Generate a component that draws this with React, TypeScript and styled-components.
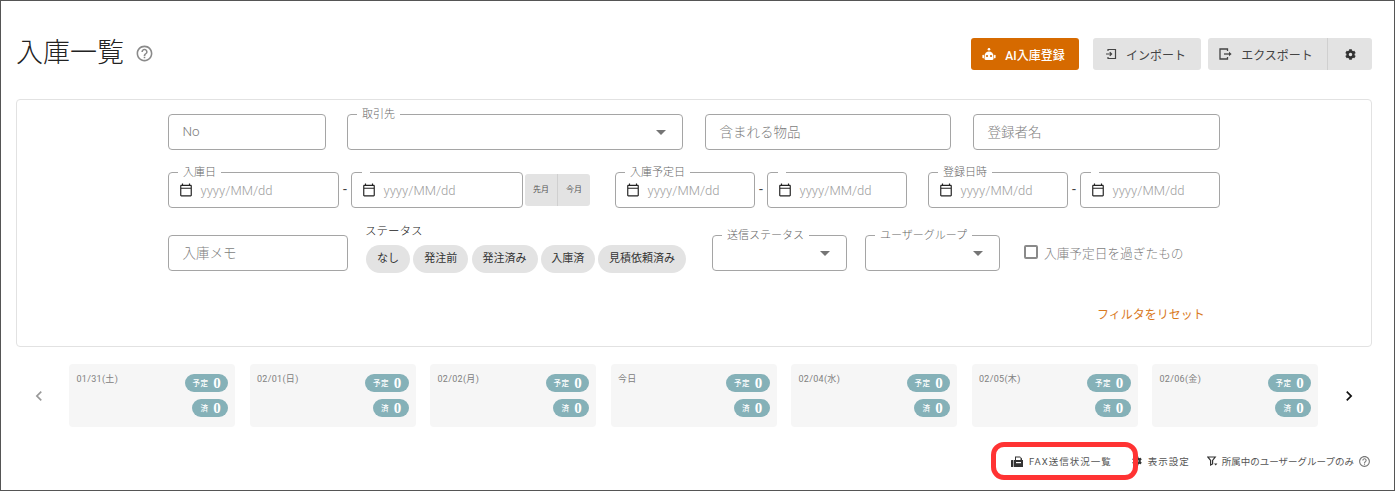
import { ReactNode } from 'react';
import styled, { createGlobalStyle } from 'styled-components';
import { FaCog } from 'react-icons/fa';
import { MdHelpOutline, MdOutlineCalendarToday, MdArrowDropDown, MdChevronLeft, MdChevronRight } from 'react-icons/md';

const GlobalStyle = createGlobalStyle`
    html, body { margin: 0; padding: 0; background: #fff; }
    body {
        font-family: Roboto, "Noto Sans CJK JP", sans-serif;
        font-weight: 300;
        color: #333;
    }
    * { box-sizing: border-box; }
`;

const Page = styled.div`
    position: relative;
    width: 1395px;
    height: 491px;
    border: 1px solid #555;
    padding: 0 22px 0 15px;
    overflow: hidden;
`;

const Header = styled.header`
    height: 98px;
    display: flex;
    justify-content: space-between;
    align-items: flex-start;
`;

const TitleWrap = styled.div`
    display: flex;
    align-items: center;
    gap: 11px;
    margin-top: 33px;
    color: #8a8a8a;
`;

const Title = styled.h1`
    margin: 0;
    font-size: 27px;
    line-height: 38px;
    font-weight: 300;
    color: #222;
`;

const Actions = styled.div`
    display: flex;
    margin-top: 37px;
`;

const Button = styled.button<{ $w: number; $ml?: number; $primary?: boolean; $joined?: 'left' | 'right' }>`
    width: ${(p) => p.$w}px;
    margin-left: ${(p) => p.$ml ?? 0}px;
    height: 32px;
    border: 0;
    padding: 0 ${(p) => (p.$joined === 'right' ? 0 : 3)}px 0 0;
    display: flex;
    align-items: center;
    justify-content: center;
    gap: 9px;
    font-family: inherit;
    font-size: 12px;
    font-weight: ${(p) => (p.$primary ? 500 : 400)};
    letter-spacing: 0;
    color: ${(p) => (p.$primary ? '#fff' : '#444')};
    background: ${(p) => (p.$primary ? '#d66a00' : '#e3e3e3')};
    border-radius: ${(p) => (p.$joined === 'left' ? '3px 0 0 3px' : p.$joined === 'right' ? '0 3px 3px 0' : '3px')};
    border-left: ${(p) => (p.$joined === 'right' ? '1px solid #d0d0d0' : '0')};
`;

const FilterPanel = styled.section`
    width: 1356px;
    height: 248px;
    border: 1px solid #e2e2e2;
    border-radius: 4px;
    padding: 14px 0 0 151px;
`;

const Row = styled.div<{ $mt?: number }>`
    display: flex;
    align-items: flex-start;
    margin-top: ${(p) => p.$mt ?? 0}px;
`;

const Field = styled.div<{ $w: number; $ml?: number }>`
    position: relative;
    flex: none;
    width: ${(p) => p.$w}px;
    height: 36px;
    margin-left: ${(p) => p.$ml ?? 0}px;
    border: 1px solid #a5a5a5;
    border-radius: 4px;
    padding: 0 13px 2px 13.5px;
    display: flex;
    align-items: center;
    justify-content: space-between;
    font-size: 13.5px;
    color: #7d7d7d;
`;

const FieldLegend = styled.span`
    position: absolute;
    top: -7px;
    left: 9px;
    padding: 0 5px;
    background: #fff;
    font-size: 11px;
    line-height: 14px;
    color: #666;
    white-space: nowrap;
`;

const LegendNotch = styled.span`
    position: absolute;
    top: -1px;
    left: 10px;
    width: 8px;
    height: 2px;
    background: #fff;
`;

const Caret = styled(MdArrowDropDown)`
    position: absolute;
    right: 9px;
    top: 5px;
    font-size: 24px;
    color: #757575;
`;

const DateInner = styled.div`
    display: flex;
    align-items: center;
    gap: 8px;
    margin: 0 0 -2px -4px;
    font-size: 13px;
    color: #a0a0a0;
    svg {
        color: #222;
    }
`;

const Dash = styled.span`
    flex: none;
    width: 12px;
    height: 36px;
    line-height: 34px;
    text-align: center;
    font-size: 14px;
    font-weight: 400;
    color: #444;
`;

const MonthGroup = styled.div`
    display: flex;
    flex: none;
    margin: 2px 0 0 2px;
    height: 32px;
    width: 65px;
    border-radius: 3px;
    background: #e3e3e3;
`;

const MonthButton = styled.span`
    flex: 1;
    text-align: center;
    line-height: 32px;
    font-size: 8px;
    font-weight: 400;
    color: #555;
    & + & {
        border-left: 1px solid #d0d0d0;
    }
`;

const StatusBlock = styled.div`
    flex: none;
    width: 321px;
    margin: -12px 0 0 18px;
`;

const StatusLabel = styled.div`
    font-size: 11.5px;
    line-height: 16px;
    font-weight: 300;
    color: #222;
    margin-left: -1px;
`;

const Chips = styled.div`
    display: flex;
    gap: 3.25px;
    margin-top: 6px;
`;

const Chip = styled.span<{ $w: number }>`
    flex: none;
    width: ${(p) => p.$w}px;
    height: 28px;
    border-radius: 14px;
    background: #e3e3e3;
    text-align: center;
    line-height: 28px;
    font-size: 11px;
    font-weight: 400;
    color: #333;
`;

const CheckField = styled.label`
    display: flex;
    align-items: center;
    gap: 6px;
    height: 36px;
    margin-left: 24px;
    padding-bottom: 2px;
    font-size: 12.7px;
    color: #7d7d7d;
`;

const CheckBox = styled.span`
    width: 14px;
    height: 14px;
    border: 2px solid #8a8a8a;
    border-radius: 2px;
`;

const Reset = styled.div`
    margin: 34px 0 0 929px;
    font-size: 12px;
    line-height: 16px;
    font-weight: 400;
    color: #d97a1e;
`;

const CalendarRow = styled.div`
    display: flex;
    align-items: center;
    margin-top: 17px;
    height: 63px;
`;

const ArrowSlot = styled.div<{ $dark?: boolean }>`
    flex: none;
    width: 52px;
    display: flex;
    justify-content: center;
    padding: ${(p) => (p.$dark ? '0 0 0 10px' : '0 6px 0 0')};
    font-size: 20px;
    color: ${(p) => (p.$dark ? '#111' : '#999')};
`;

const DayList = styled.div`
    display: flex;
    gap: 14.5px;
    margin-left: 1px;
`;

const DayCard = styled.div`
    position: relative;
    flex: none;
    width: 166px;
    height: 63px;
    border-radius: 4px;
    background: #f6f6f6;
    padding: 9px 7.5px;
    font-size: 9px;
    line-height: 13px;
    letter-spacing: 0.3px;
    font-weight: 400;
    color: #808080;
`;

const Badges = styled.div`
    position: absolute;
    top: 10px;
    right: 7px;
    display: flex;
    flex-direction: column;
    align-items: flex-end;
    gap: 7px;
`;

const Badge = styled.span`
    display: flex;
    align-items: center;
    gap: 5px;
    height: 18px;
    padding: 0 7px 0 8px;
    border-radius: 9px;
    background: #85b1b8;
    color: #fff;
    font-size: 7.5px;
    font-weight: 500;
`;

const BadgeCount = styled.b`
    font-family: "Liberation Serif", serif;
    font-size: 15px;
    font-weight: 700;
`;

const Footer = styled.footer`
    display: flex;
    justify-content: flex-end;
    align-items: center;
    margin-top: 24px;
    height: 20px;
    padding-right: 1px;
    font-size: 9.5px;
    font-weight: 400;
    color: #555;
`;

const FooterItem = styled.span<{ $ml?: number; $gap?: number; $spacing?: number }>`
    display: flex;
    align-items: center;
    gap: ${(p) => p.$gap ?? 5}px;
    margin-left: ${(p) => p.$ml ?? 0}px;
    letter-spacing: ${(p) => p.$spacing ?? 0}px;
    svg {
        color: #333;
        flex: none;
    }
`;

const Highlight = styled.div`
    position: absolute;
    left: 990px;
    top: 441px;
    width: 147px;
    height: 38px;
    border: 5px solid #ff3333;
    border-radius: 13px;
    pointer-events: none;
`;

const RobotIcon = () => (
    <svg width='14' height='13' viewBox='0 0 14 13' fill='#fff'>
        <circle cx='7' cy='1.3' r='1.3' />
        <path d='M2.5 8a4.5 4.5 0 0 1 9 0v2.5a1.5 1.5 0 0 1-1.5 1.5H4a1.5 1.5 0 0 1-1.5-1.5Z' />
        <rect x='.4' y='6.8' width='1.6' height='3.6' rx='.8' />
        <rect x='12' y='6.8' width='1.6' height='3.6' rx='.8' />
        <circle cx='5' cy='8' r='1.1' fill='#d66a00' />
        <circle cx='9' cy='8' r='1.1' fill='#d66a00' />
    </svg>
);

const ImportIcon = () => (
    <svg width='12' height='12' viewBox='0 0 12 12' fill='none' stroke='#444' strokeWidth='1.2'>
        <path d='M3 3V1.5h7.5v9H3V9' />
        <path d='M1 6h5.5M4.8 4.2 6.6 6 4.8 7.8' />
    </svg>
);

const ExportIcon = () => (
    <svg width='13' height='12' viewBox='0 0 13 12' fill='none' stroke='#444' strokeWidth='1.3'>
        <path d='M8.5 3V1H1v10h7.5V9' />
        <path d='M5 6h6' />
        <path d='M10 3.8 12.6 6 10 8.2Z' fill='#444' stroke='none' />
    </svg>
);

const FaxIcon = () => (
    <svg width='12' height='11' viewBox='0 0 12 11'>
        <rect x='0' y='4' width='2.4' height='7' rx='.5' fill='#333' />
        <path d='M3 4h1V.5h5L11 2.500V4h1v7H3Z' fill='#333' />
        <rect x='5' y='1.500' width='4.500' height='2.500' fill='#fff' />
        <rect x='5' y='6' width='5' height='1.200' fill='#fff' />
    </svg>
);

const FilterIcon = () => (
    <svg width='11' height='11' viewBox='0 0 11 11' fill='none' stroke='#333' strokeWidth='1.2'>
        <path d='M.8 1h7.4L5.6 4.4V8L3.6 9V4.4Z' />
        <path d='M7 7.6h3.4L8.7 9.6Z' fill='#333' stroke='none' />
    </svg>
);

const DateField = ({ w, ml, legend }: { w: number; ml?: number; legend?: string }) => (
    <Field $w={w} $ml={ml}>
        {legend ? <FieldLegend>{legend}</FieldLegend> : <LegendNotch />}
        <DateInner>
            <MdOutlineCalendarToday size={14} />
            yyyy/MM/dd
        </DateInner>
    </Field>
);

const SelectField = ({ w, ml, legend }: { w: number; ml?: number; legend: string }) => (
    <Field $w={w} $ml={ml}>
        <FieldLegend>{legend}</FieldLegend>
        <Caret />
    </Field>
);

const days = ['01/31(土)', '02/01(日)', '02/02(月)', '今日', '02/04(水)', '02/05(木)', '02/06(金)'];

const chips: [string, number][] = [
    ['なし', 44],
    ['発注前', 55],
    ['発注済み', 66],
    ['入庫済', 54],
    ['見積依頼済み', 88],
];

const ButtonLabel = ({ children }: { children: ReactNode }) => <span>{children}</span>;

const App = () => {
    return (
        <Page>
            <GlobalStyle />
            <Header>
                <TitleWrap>
                    <Title>入庫一覧</Title>
                    <MdHelpOutline size={19} />
                </TitleWrap>
                <Actions>
                    <Button $w={108} $primary>
                        <RobotIcon />
                        <ButtonLabel>AI入庫登録</ButtonLabel>
                    </Button>
                    <Button $w={108} $ml={14}>
                        <ImportIcon />
                        <ButtonLabel>インポート</ButtonLabel>
                    </Button>
                    <Button $w={119} $ml={7} $joined='left'>
                        <ExportIcon />
                        <ButtonLabel>エクスポート</ButtonLabel>
                    </Button>
                    <Button $w={45} $joined='right'>
                        <FaCog size={11} color='#333' />
                    </Button>
                </Actions>
            </Header>

            <FilterPanel>
                <Row>
                    <Field $w={158}>No</Field>
                    <SelectField w={336} ml={21} legend='取引先' />
                    <Field $w={246} $ml={22}>含まれる物品</Field>
                    <Field $w={247} $ml={22}>登録者名</Field>
                </Row>
                <Row $mt={22}>
                    <DateField w={171} legend='入庫日' />
                    <Dash>-</Dash>
                    <DateField w={172} />
                    <MonthGroup>
                        <MonthButton>先月</MonthButton>
                        <MonthButton>今月</MonthButton>
                    </MonthGroup>
                    <DateField w={140} ml={25} legend='入庫予定日' />
                    <Dash>-</Dash>
                    <DateField w={140} />
                    <DateField w={140} ml={21} legend='登録日時' />
                    <Dash>-</Dash>
                    <DateField w={140} />
                </Row>
                <Row $mt={27}>
                    <Field $w={180}>入庫メモ</Field>
                    <StatusBlock>
                        <StatusLabel>ステータス</StatusLabel>
                        <Chips>
                            {chips.map(([label, w]) => (
                                <Chip key={label} $w={w}>
                                    {label}
                                </Chip>
                            ))}
                        </Chips>
                    </StatusBlock>
                    <SelectField w={135} ml={25} legend='送信ステータス' />
                    <SelectField w={135} ml={18} legend='ユーザーグループ' />
                    <CheckField>
                        <CheckBox />
                        入庫予定日を過ぎたもの
                    </CheckField>
                </Row>
                <Reset>フィルタをリセット</Reset>
            </FilterPanel>

            <CalendarRow>
                <ArrowSlot>
                    <MdChevronLeft />
                </ArrowSlot>
                <DayList>
                    {days.map((day) => (
                        <DayCard key={day}>
                            {day}
                            <Badges>
                                <Badge>
                                    予定<BadgeCount>0</BadgeCount>
                                </Badge>
                                <Badge>
                                    済<BadgeCount>0</BadgeCount>
                                </Badge>
                            </Badges>
                        </DayCard>
                    ))}
                </DayList>
                <ArrowSlot $dark>
                    <MdChevronRight />
                </ArrowSlot>
            </CalendarRow>

            <Footer>
                <FooterItem $gap={6} $spacing={1}>
                    <FaxIcon />
                    FAX送信状況一覧
                </FooterItem>
                <FooterItem $ml={20} $gap={6} $spacing={1}>
                    <FaCog size={10} />
                    表示設定
                </FooterItem>
                <FooterItem $ml={17} $gap={4}>
                    <FilterIcon />
                    所属中のユーザーグループのみ
                    <MdHelpOutline size={13} color='#777' />
                </FooterItem>
            </Footer>
            <Highlight />
        </Page>
    );
};

export default App;
